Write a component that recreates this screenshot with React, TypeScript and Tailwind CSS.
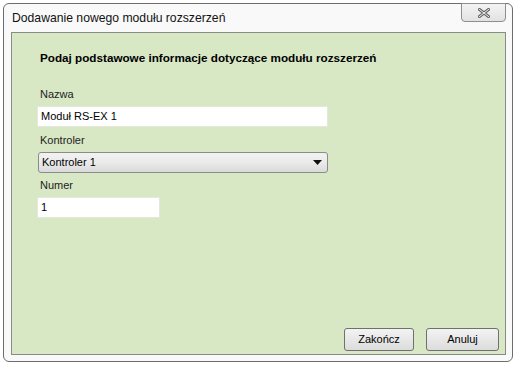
export default function App() {
  return (
    <div className="w-[516px] h-[365px] bg-white p-[3px] font-['Liberation_Sans',Arial,sans-serif] text-[11px] text-black">
      <div className="relative flex h-[359px] w-[510px] flex-col rounded-[6px] border border-[#6d6d6d] bg-[#f9f9f9] pb-[6px] pl-[7px] pr-[6px]">
        <div className="flex h-[28px] items-center pl-[1px] pt-[1px] text-[12.2px] text-[#111]">Dodawanie nowego modułu rozszerzeń</div>
        <button className="absolute right-[6px] top-[-1px] flex h-[19px] w-[45px] items-center justify-center rounded-b-[4px] border border-[#8e8e8e] bg-gradient-to-b from-[#f4f4f4] to-[#e2e2e2]">
          <svg width="12" height="10" viewBox="0 0 12 10">
            <path d="M1.5 1.5 L10.5 8.5 M10.5 1.5 L1.5 8.5" stroke="#666" strokeWidth="3" strokeLinecap="square" />
            <path d="M1.5 1.5 L10.5 8.5 M10.5 1.5 L1.5 8.5" stroke="#f2f2f2" strokeWidth="1" strokeLinecap="square" />
          </svg>
        </button>
        <div className="flex flex-1 flex-col border border-[#8a8a8a] bg-[#d8e8c5] pl-[25px] pr-[6px] pb-[3px]">
          <div className="mt-[18px] pl-[3px] text-[11.7px] font-bold leading-[14px]">Podaj podstawowe informacje dotyczące modułu rozszerzeń</div>
          <div className="mt-[22px] pl-[3px] leading-[14px] text-[#222]">Nazwa</div>
          <div className="mt-[5px] flex h-[21px] w-[291px] items-center border border-[#e2e8da] bg-white pl-[3px]">Moduł RS-EX 1</div>
          <div className="mt-[6px] pl-[3px] leading-[14px] text-[#222]">Kontroler</div>
          <div className="ml-[1px] mt-[5px] flex h-[21px] w-[290px] items-center justify-between rounded-[3px] border border-[#8b8b8b] bg-gradient-to-b from-[#f2f2f2] via-[#ebebeb] to-[#dadada] pl-[3px] pr-[5px]">
            <span>Kontroler 1</span>
            <svg width="9" height="5" viewBox="0 0 9 5"><path d="M0 0 H9 L4.5 5 Z" fill="#111" /></svg>
          </div>
          <div className="mt-[5px] pl-[3px] leading-[14px] text-[#222]">Numer</div>
          <div className="mt-[5px] flex h-[21px] w-[123px] items-center border border-[#e2e8da] bg-white pl-[3px]">1</div>
          <div className="mt-auto flex justify-end gap-[12px]">
            <button className="h-[23px] w-[70px] rounded-[3px] border border-[#707070] bg-gradient-to-b from-[#f3f3f3] to-[#dcdcdc]">Zakończ</button>
            <button className="h-[23px] w-[73px] rounded-[3px] border border-[#707070] bg-gradient-to-b from-[#f3f3f3] to-[#dcdcdc]">Anuluj</button>
          </div>
        </div>
      </div>
    </div>
  );
}
